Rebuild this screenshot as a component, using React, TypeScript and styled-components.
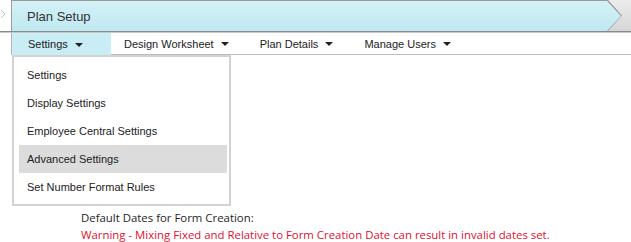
import React from 'react'
import styled, { createGlobalStyle } from 'styled-components'

const GlobalStyle = createGlobalStyle`
  body {
    margin: 0;
    background: #ffffff;
    font-family: "Liberation Sans", Arial, sans-serif;
    color: #222;
  }
`

const tabs = ['Settings', 'Design Worksheet', 'Plan Details', 'Manage Users']
const menuItems = [
  'Settings',
  'Display Settings',
  'Employee Central Settings',
  'Advanced Settings',
  'Set Number Format Rules',
]

export default function App() {
  return (
    <>
      <GlobalStyle />
      <Page>
        <HeaderRow>
          <Gutter>
            <svg width="6" height="10" viewBox="0 0 6 10">
              <path d="M1 1 L5 5 L1 9" fill="none" stroke="#c4c4c4" strokeWidth="1" />
            </svg>
          </Gutter>
          <BannerEdge>
            <Banner>Plan Setup</Banner>
          </BannerEdge>
        </HeaderRow>
        <TabBar>
          {tabs.map((t, i) => (
            <Tab key={t} active={i === 0}>
              {t}
              <Caret />
            </Tab>
          ))}
          <TabFill />
          <Menu>
            {menuItems.map((m) => (
              <MenuItem key={m} selected={m === 'Advanced Settings'}>
                {m}
              </MenuItem>
            ))}
          </Menu>
        </TabBar>
        <Content>
          <Label>Default Dates for Form Creation:</Label>
          <Warning>
            Warning - Mixing Fixed and Relative to Form Creation Date can result in invalid dates set.
          </Warning>
        </Content>
      </Page>
    </>
  )
}

const Page = styled.div`
  width: 631px;
  height: 242px;
  overflow: hidden;
`

const HeaderRow = styled.div`
  display: flex;
  height: 31px;
  background: linear-gradient(#ececec, #d6d6d6);
  border-bottom: 1px solid #8a8a8a;
  box-shadow: 0 1px 0 #c8c8c8;
`

const Gutter = styled.div`
  width: 11px;
  background: #ffffff;
  display: flex;
  align-items: flex-start;
  padding-top: 9px;
  box-sizing: border-box;
`

const BannerEdge = styled.div`
  flex: 1;
  margin-right: 9px;
  padding: 1px 0 0 1px;
  background: #9a9a9a;
  clip-path: polygon(0 0, calc(100% - 14px) 0, 100% 50%, calc(100% - 14px) 100%, 0 100%);
`

const Banner = styled.div`
  height: 100%;
  background: linear-gradient(#d3f1f7, #c0e8f0);
  clip-path: polygon(0 0, calc(100% - 15px) 0, calc(100% - 1px) 50%, calc(100% - 15px) 100%, 0 100%);
  display: flex;
  align-items: center;
  padding-left: 15px;
  font-size: 13px;
  color: #333;
`

const TabBar = styled.div`
  position: relative;
  display: flex;
  height: 22px;
  margin-top: 1px;
  padding-left: 11px;
`

const Tab = styled.div<{ active?: boolean }>`
  display: flex;
  align-items: center;
  font-size: 11px;
  color: #222;
  white-space: nowrap;
  box-sizing: border-box;
  min-width: ${(p) => (p.active ? '100px' : 'auto')};
  padding: ${(p) => (p.active ? '0 0 0 16px' : '0 18px 0 13px')};
  background: ${(p) => (p.active ? '#c9edf4' : '#ffffff')};
  border-left: ${(p) => (p.active ? '1px solid #b4b4b4' : 'none')};
  border-bottom: ${(p) => (p.active ? 'none' : '1px solid #bdbdbd')};
`

const Caret = styled.span`
  display: inline-block;
  margin-left: 7px;
  margin-top: 1px;
  width: 0;
  height: 0;
  border-left: 4px solid transparent;
  border-right: 4px solid transparent;
  border-top: 4px solid #222;
`

const TabFill = styled.div`
  flex: 1;
  border-bottom: 1px solid #bdbdbd;
`

const Menu = styled.div`
  position: absolute;
  left: 12px;
  top: 22px;
  width: 219px;
  box-sizing: border-box;
  padding: 4px 2px 3px 5px;
  background: #ffffff;
  border: 2px solid #d2d2d2;
`

const MenuItem = styled.div<{ selected?: boolean }>`
  height: 28px;
  display: flex;
  align-items: center;
  padding-left: 8px;
  font-size: 11px;
  color: #222;
  background: ${(p) => (p.selected ? '#dcdcdc' : 'transparent')};
`

const Content = styled.div`
  margin-top: 154px;
  padding-left: 81px;
  font-family: "Open Sans", "Noto Sans", sans-serif;
  font-size: 11.4px;
  line-height: 17px;
`

const Label = styled.div`
  color: #1e1e1e;
`

const Warning = styled.div`
  color: #e0102f;
`
